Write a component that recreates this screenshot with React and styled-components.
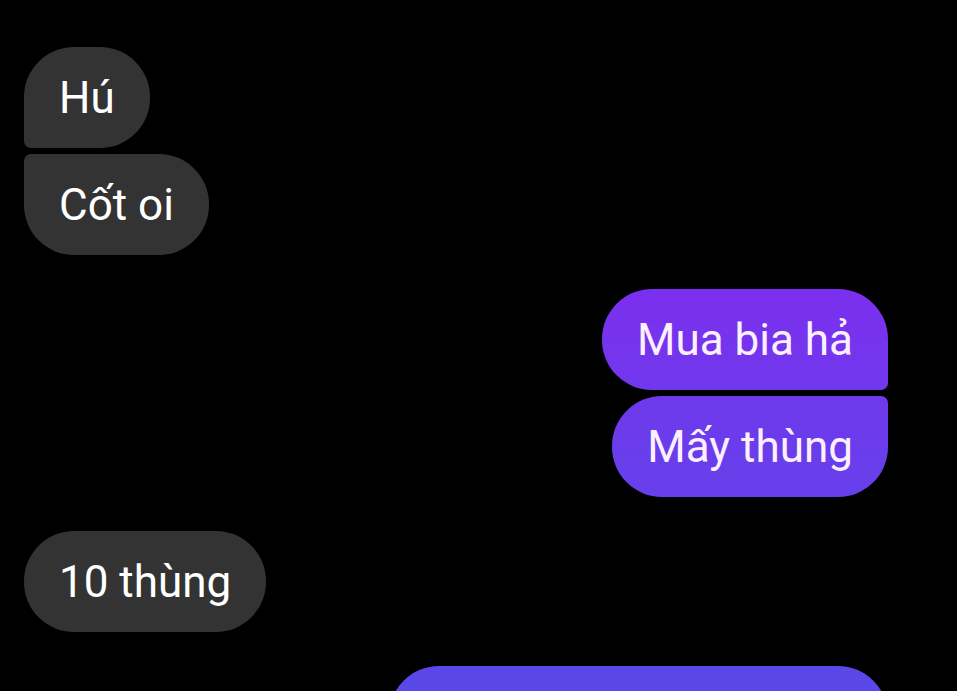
import styled, { createGlobalStyle } from "styled-components";

const GlobalStyle = createGlobalStyle`
  html, body {
    margin: 0;
    padding: 0;
    background: #000000;
    height: 100%;
    overflow: hidden;
  }
  body {
    font-family: Roboto, "Noto Sans", "Liberation Sans", sans-serif;
  }
`

const messages = [
  { mine: false, items: [{ text: "Hú" }, { text: "Cốt oi" }] },
  { mine: true, items: [{ text: "Mua bia hả" }, { text: "Mấy thùng" }] },
  { mine: false, items: [{ text: "10 thùng" }] },
  { mine: true, items: [{ text: "", width: 499 }] },
];

function radius(mine, index, count) {
  const big = 50;
  const small = 7;
  const first = index === 0;
  const last = index === count - 1;
  if (mine) {
    const tr = first ? big : small;
    const br = last ? big : small;
    return `${big}px ${tr}px ${br}px ${big}px`;
  }
  const tl = first ? big : small;
  const bl = last ? big : small;
  return `${tl}px ${big}px ${big}px ${bl}px`;
}

export default function App() {
  return (
    <>
      <GlobalStyle />
      <Thread>
        {messages.map((group, g) => (
          <Group key={g} $mine={group.mine}>
            {group.items.map((msg, i) => (
              <Bubble
                key={i}
                $mine={group.mine}
                $radius={radius(group.mine, i, group.items.length)}
                $width={msg.width}
              >
                {msg.text}
              </Bubble>
            ))}
          </Group>
        ))}
      </Thread>
    </>
  )
}

const Thread = styled.div`
  display: flex;
  flex-direction: column;
  gap: 34px;
  padding: 47px 69px 0 24px;
`

const Group = styled.div`
  display: flex;
  flex-direction: column;
  align-items: ${(p) => (p.$mine ? "flex-end" : "flex-start")};
  gap: 6px;
`

const Bubble = styled.div`
  box-sizing: border-box;
  height: 101px;
  width: ${(p) => (p.$width ? `${p.$width}px` : "auto")};
  display: flex;
  align-items: center;
  padding: 0 35px 0 35px;
  font-size: 44px;
  font-weight: 400;
  white-space: pre;
  border-radius: ${(p) => p.$radius};
  color: ${(p) => (p.$mine ? "#fcefff" : "#ffffff")};
  background: ${(p) =>
    p.$mine
      ? "linear-gradient(180deg, #8a22f2 0px, #7a30ee 300px, #6a3deb 450px, #5a48e8 691px) fixed"
      : "#333333"};
`
